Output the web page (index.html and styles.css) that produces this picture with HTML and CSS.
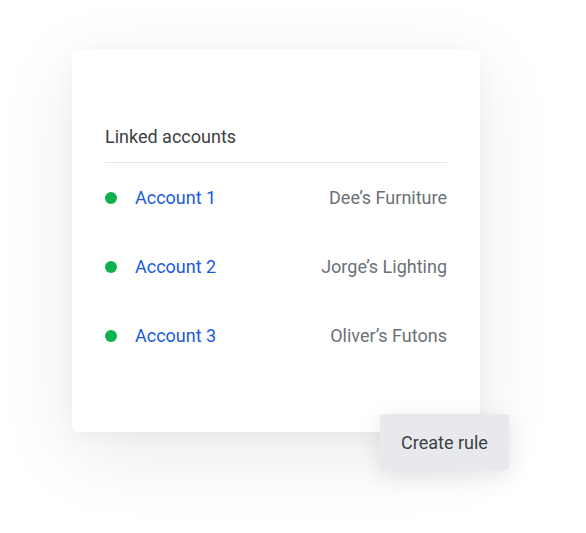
FILE: index.html
```html
<!DOCTYPE html>
<html>
<head>
<meta charset="utf-8">
<link rel="stylesheet" href="styles.css">
</head>
<body>
<div class="stage">
  <div class="card">
    <div class="title">Linked accounts</div>
    <ul class="list">
      <li class="row"><span class="dot"></span><a class="acct">Account 1</a><span class="biz">Dee’s Furniture</span></li>
      <li class="row"><span class="dot"></span><a class="acct">Account 2</a><span class="biz">Jorge’s Lighting</span></li>
      <li class="row"><span class="dot"></span><a class="acct">Account 3</a><span class="biz">Oliver’s Futons</span></li>
    </ul>
    <button class="create">Create rule</button>
  </div>
</div>
</body>
</html>
```
FILE: styles.css
```css
html, body {
  margin: 0;
  background: #ffffff;
  font-family: Roboto, "Liberation Sans", sans-serif;
}
.stage {
  box-sizing: border-box;
  height: 533px;
  padding: 49px 0 0 72px;
}
.card {
  position: relative;
  box-sizing: border-box;
  width: 408px;
  height: 383px;
  padding: 76px 33px 0 33px;
  background: #ffffff;
  border-radius: 6px;
  box-shadow: 0 20px 80px rgba(0, 0, 0, 0.09), 0 4px 20px rgba(0, 0, 0, 0.03);
}
.title {
  font-size: 18px;
  line-height: 24px;
  color: #3c4043;
  padding-bottom: 13px;
  border-bottom: 1px solid #e6e7eb;
}
.list {
  list-style: none;
  margin: 0;
  padding: 0;
}
.row {
  display: flex;
  align-items: center;
  height: 69px;
  font-size: 18px;
  line-height: 24px;
}
.dot {
  width: 12px;
  height: 12px;
  border-radius: 50%;
  background: #0fb14f;
  margin-right: 18px;
  flex: none;
}
.acct {
  color: #1a5ad7;
  flex: 1;
}
.biz {
  color: #6b7177;
}
.create {
  position: absolute;
  left: 308px;
  top: 365px;
  width: 129px;
  height: 56px;
  border: none;
  border-radius: 4px;
  background: #e8e9ed;
  color: #3c4043;
  font-family: Roboto, "Liberation Sans", sans-serif;
  font-size: 18px;
  padding: 0;
  box-shadow: 0 6px 24px rgba(0, 0, 0, 0.10);
}
```
